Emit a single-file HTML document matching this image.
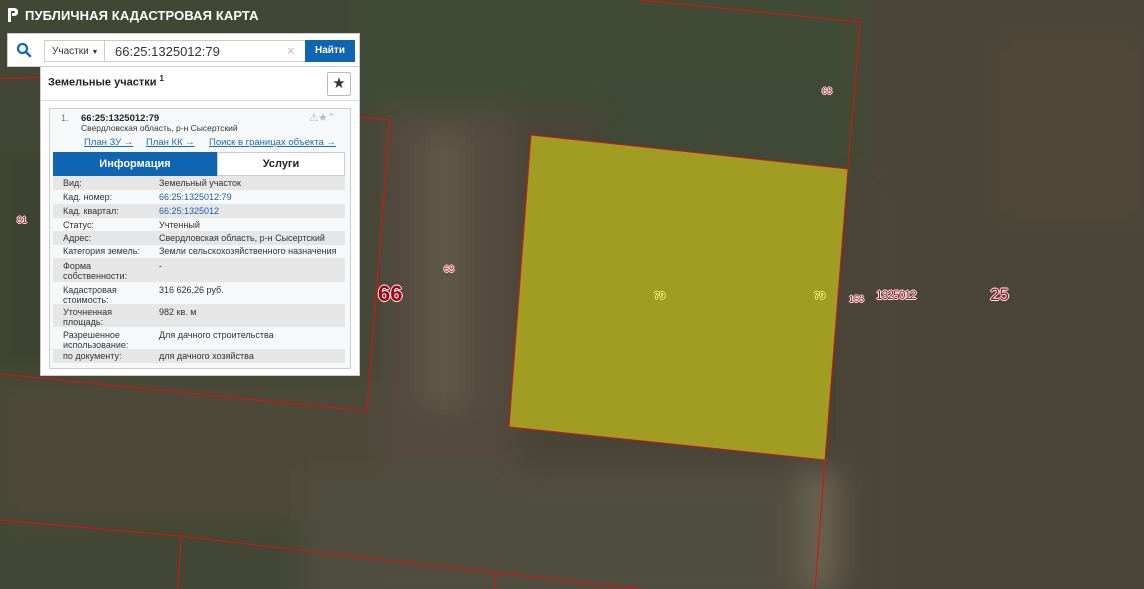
<!DOCTYPE html>
<html><head><meta charset="utf-8"><style>
*{margin:0;padding:0;box-sizing:border-box}
html,body{width:1144px;height:589px;overflow:hidden}
body{position:relative;font-family:"Liberation Sans","DejaVu Sans",sans-serif;background:#4a4637}
.abs{position:absolute}
.lbl{position:absolute;font-family:"Liberation Sans",sans-serif;color:#b00010;text-shadow:-1px 0 #fff,1px 0 #fff,0 -1px #fff,0 1px #fff}
.row{position:absolute;left:53px;width:292px;font-size:9px;color:#333;line-height:10px;background:#f7f8f9}
.g{background:#e6e6e6}
.row .k{position:absolute;left:10px;top:3px}
.row .v{position:absolute;left:106px;top:3px}
.blue{color:#1a5fa8}
</style></head><body>
<svg class="abs" style="left:0;top:0;display:block" width="1144" height="589">
<defs>
<filter id="b" x="-20%" y="-20%" width="140%" height="140%"><feGaussianBlur stdDeviation="14"/></filter>
</defs>
<rect width="1144" height="589" fill="#4a4438"/>
<g filter="url(#b)">
<rect x="-40" y="-40" width="420" height="680" fill="#434734"/>
<rect x="360" y="-40" width="500" height="150" fill="#3f4c35"/>
<rect x="600" y="80" width="260" height="100" fill="#404834"/>
<rect x="860" y="-40" width="320" height="680" fill="#4b4438"/>
<rect x="380" y="110" width="140" height="440" fill="#524a3e"/>
<rect x="420" y="130" width="50" height="280" fill="#5f5647"/>
<rect x="0" y="380" width="380" height="140" fill="#4d4839"/>
<rect x="300" y="470" width="520" height="140" fill="#4f4e3d"/>
<rect x="800" y="470" width="40" height="120" fill="#6a6251"/>
<rect x="1000" y="40" width="140" height="180" fill="#514639"/>
<rect x="0" y="150" width="50" height="220" fill="#3d4531"/>
</g>
<polygon points="531,135 848,169 825,460 509,427" fill="#a09d22" stroke="#d01818" stroke-width="1"/>
<g stroke="#e01010" stroke-width="1" fill="none">
<polyline points="0,79 40,77"/>
<polyline points="360,117 390,120 367,411 0,374"/>
<polyline points="640,0 860,22 848,169"/>
<polyline points="825,460 815,589"/>
<polyline points="0,520 180,536 400,562 640,589"/>
<line x1="181" y1="537" x2="178" y2="589"/>
<line x1="496" y1="573" x2="495" y2="589"/>
</g>
</svg>
<div class="lbl" style="left:17px;top:215px;font-size:9px">81</div>
<div class="lbl" style="left:822px;top:86px;font-size:9px">68</div>
<div class="lbl" style="left:444px;top:264px;font-size:9px">68</div>
<div class="lbl" style="left:378px;top:281px;font-size:22px;font-weight:bold">66</div>
<div class="lbl" style="left:990px;top:285px;font-size:17px">25</div>
<div class="lbl" style="left:876px;top:288px;font-size:12px;letter-spacing:-1px">1325012</div>
<div class="lbl" style="left:849px;top:294px;font-size:9px">156</div>
<div class="lbl" style="left:654px;top:291px;font-size:10px;color:#777000;text-shadow:-1px 0 #ffff80,1px 0 #ffff80,0 -1px #ffff80,0 1px #ffff80">79</div>
<div class="lbl" style="left:814px;top:291px;font-size:10px;color:#777000;text-shadow:-1px 0 #ffff80,1px 0 #ffff80,0 -1px #ffff80,0 1px #ffff80">79</div>

<svg class="abs" style="left:7px;top:7px" width="12" height="16" viewBox="0 0 12 16"><path d="M1 2 Q1 1 2 1 L7 1 Q11 1 11 5 Q11 9 7 9 L5 9 L5 6 L7 6 Q8 6 8 5 Q8 4 7 4 L4 4 L4 15 L1 15 Z" fill="#fff"/></svg>
<div class="abs" style="left:25px;top:8px;font-size:13px;font-weight:bold;color:#fff;letter-spacing:.1px">ПУБЛИЧНАЯ КАДАСТРОВАЯ КАРТА</div>

<div class="abs" style="left:7px;top:33px;width:353px;height:34px;background:#fff;border:1px solid #ccc"></div>
<svg class="abs" style="left:16px;top:42px" width="16" height="16" viewBox="0 0 16 16"><circle cx="6.5" cy="6.5" r="4.5" stroke="#1a6cb5" stroke-width="2.3" fill="none"/><line x1="10" y1="10" x2="14" y2="14" stroke="#1a6cb5" stroke-width="2.6" stroke-linecap="round"/></svg>
<div class="abs" style="left:44px;top:40px;width:61px;height:22px;border:1px solid #ccc;font-size:10px;color:#333;padding:5px 0 0 7px">Участки <span style="font-size:7px">▼</span></div>
<div class="abs" style="left:104px;top:40px;width:202px;height:22px;border:1px solid #ccc;font-size:13px;color:#333;padding:3px 0 0 10px">66:25:1325012:79<span style="position:absolute;left:182px;top:2px;color:#bbb;font-size:13px">×</span></div>
<div class="abs" style="left:305px;top:40px;width:50px;height:22px;background:#0f65b1;color:#fff;font-size:10px;font-weight:bold;text-align:center;line-height:22px">Найти</div>

<div class="abs" style="left:40px;top:67px;width:320px;height:309px;background:#fff;border:1px solid #ccc;border-top:none"></div>
<div class="abs" style="left:41px;top:100px;width:318px;height:1px;background:#ddd"></div>
<div class="abs" style="left:48px;top:74px;font-size:11px;color:#222;font-weight:bold">Земельные участки <sup style="font-size:8px">1</sup></div>
<div class="abs" style="left:327px;top:72px;width:24px;height:24px;border:1px solid #bbb;border-radius:2px;text-align:center;font-size:15px;line-height:22px;color:#333">★</div>
<div class="abs" style="left:49px;top:108px;width:302px;height:261px;border:1px solid #ccc;border-radius:2px;background:#f7f8f9"></div>
<div class="abs" style="left:61px;top:113px;font-size:9px;color:#777">1.</div>
<div class="abs" style="left:81px;top:113px;font-size:9.5px;font-weight:bold;color:#222">66:25:1325012:79</div>
<div class="abs" style="left:81px;top:123px;font-size:8.5px;color:#333">Свердловская область, р-н Сысертский</div>
<div class="abs" style="left:309px;top:111px;font-size:11px;color:#bbb;letter-spacing:-1px">⚠★⌃</div>
<div class="abs" style="left:84px;top:137px;font-size:9.5px;color:#1a6cb5;text-decoration:underline">План ЗУ →</div>
<div class="abs" style="left:146px;top:137px;font-size:9.5px;color:#1a6cb5;text-decoration:underline">План КК →</div>
<div class="abs" style="left:209px;top:137px;font-size:9.5px;color:#1a6cb5;text-decoration:underline">Поиск в границах объекта →</div>
<div class="abs" style="left:53px;top:152px;width:164px;height:24px;background:#0f65b1;color:#fff;font-size:11px;font-weight:bold;text-align:center;line-height:24px">Информация</div>
<div class="abs" style="left:217px;top:152px;width:128px;height:24px;border:1px solid #ccc;background:#fff;color:#222;font-size:11px;font-weight:bold;text-align:center;line-height:22px">Услуги</div>

<div class="row g" style="top:176px;height:14px"><div class="k" style="top:2px">Вид:</div><div class="v" style="top:2px">Земельный участок</div></div>
<div class="row" style="top:190px;height:14px"><div class="k" style="top:2px">Кад. номер:</div><div class="v blue" style="top:2px">66:25:1325012:79</div></div>
<div class="row g" style="top:204px;height:14px"><div class="k" style="top:2px">Кад. квартал:</div><div class="v blue" style="top:2px">66:25:1325012</div></div>
<div class="row" style="top:218px;height:13px"><div class="k" style="top:2px">Статус:</div><div class="v" style="top:2px">Учтенный</div></div>
<div class="row g" style="top:231px;height:14px"><div class="k" style="top:2px">Адрес:</div><div class="v" style="top:2px">Свердловская область, р-н Сысертский</div></div>
<div class="row" style="top:245px;height:13px"><div class="k" style="top:1px">Категория земель:</div><div class="v" style="top:1px">Земли сельскохозяйственного назначения</div></div>
<div class="row g" style="top:258px;height:24px"><div class="k">Форма<br>собственности:</div><div class="v">-</div></div>
<div class="row" style="top:282px;height:22px"><div class="k">Кадастровая<br>стоимость:</div><div class="v">316 626,26 руб.</div></div>
<div class="row g" style="top:304px;height:23px"><div class="k">Уточненная<br>площадь:</div><div class="v">982 кв. м</div></div>
<div class="row" style="top:327px;height:22px"><div class="k">Разрешенное<br>использование:</div><div class="v">Для дачного строительства</div></div>
<div class="row g" style="top:349px;height:14px"><div class="k" style="top:2px">по документу:</div><div class="v" style="top:2px">для дачного хозяйства</div></div>
</body></html>
